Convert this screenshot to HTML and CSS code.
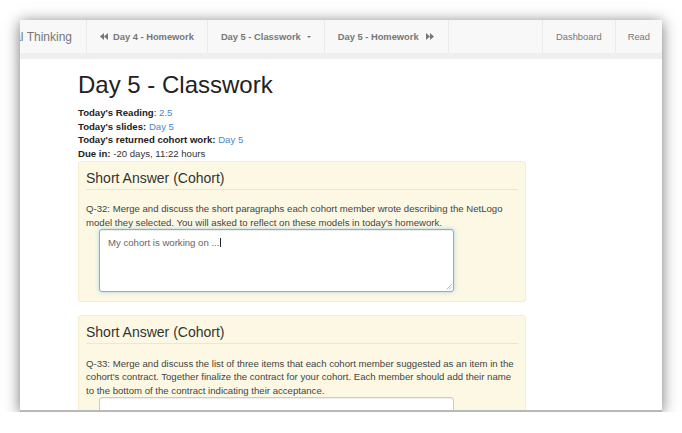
FILE: index.html
```html
<!DOCTYPE html>
<html>
<head>
<meta charset="utf-8">
<link rel="stylesheet" href="styles.css">
</head>
<body>
<div class="window">
  <nav class="navbar">
    <div class="brand"><span>Computational Thinking</span></div>
    <ul class="nav nav-left">
      <li class="item bold"><svg class="icon" width="8" height="7" viewBox="0 0 8 7"><polygon points="0,3.5 4,0 4,7" fill="#777"/><polygon points="4,3.5 8,0 8,7" fill="#777"/></svg>Day 4 - Homework</li>
      <li class="item bold">Day 5 - Classwork<span class="caret"></span></li>
      <li class="item bold last">Day 5 - Homework<svg class="icon icon-r" width="8" height="7" viewBox="0 0 8 7"><polygon points="0,0 4,3.5 0,7" fill="#777"/><polygon points="4,0 8,3.5 4,7" fill="#777"/></svg></li>
    </ul>
    <ul class="nav nav-right">
      <li class="item">Dashboard</li>
      <li class="item read">Read</li>
    </ul>
  </nav>
  <div class="strip"></div>
  <main class="content">
    <h1>Day 5 - Classwork</h1>
    <div class="info">
      <div><b>Today's Reading</b>: <a>2.5</a></div>
      <div><b>Today's slides:</b> <a>Day 5</a></div>
      <div><b>Today's returned cohort work:</b> <a>Day 5</a></div>
      <div><b>Due in:</b> -20 days, 11:22 hours</div>
    </div>
    <section class="panel">
      <h3 class="panel-title">Short Answer (Cohort)</h3>
      <p class="question">Q-32: Merge and discuss the short paragraphs each cohort member wrote describing the NetLogo model they selected. You will asked to reflect on these models in today's homework.</p>
      <div class="textarea focus"><span class="ph">My cohort is working on ...</span><span class="cursor"></span>
        <svg class="grip" width="6" height="6" viewBox="0 0 6 6"><line x1="5.5" y1="0.5" x2="0.5" y2="5.5" stroke="#aaa" stroke-width="0.8"/><line x1="5.5" y1="3" x2="3" y2="5.5" stroke="#aaa" stroke-width="0.8"/></svg>
      </div>
    </section>
    <section class="panel">
      <h3 class="panel-title">Short Answer (Cohort)</h3>
      <p class="question">Q-33: Merge and discuss the list of three items that each cohort member suggested as an item in the cohort's contract. Together finalize the contract for your cohort. Each member should add their name to the bottom of the contract indicating their acceptance.</p>
      <div class="textarea"></div>
    </section>
  </main>
</div>
</body>
</html>
```
FILE: styles.css
```css
html, body {
  margin: 0;
  padding: 0;
  background: #fff;
}
body {
  padding: 20px 20px 0 20px;
  font-family: "Liberation Sans", Arial, sans-serif;
  color: #333;
}
.window {
  width: 642px;
  height: 390px;
  overflow: hidden;
  background: #fff;
  border-bottom: 2px solid #b8b8b8;
  box-shadow: 0 2px 14px rgba(0, 0, 0, 0.55);
}
.navbar {
  display: flex;
  height: 33px;
  background: #f8f8f8;
  font-size: 9.33px;
  color: #777;
}
.brand {
  width: 66px;
  flex: none;
  box-sizing: border-box;
  padding-right: 14px;
  display: flex;
  justify-content: flex-end;
  align-items: center;
  overflow: hidden;
  white-space: nowrap;
  font-size: 12px;
  color: #777;
}
.nav {
  display: flex;
  margin: 0;
  padding: 0;
  list-style: none;
}
.nav-right {
  margin-left: auto;
}
.item {
  display: flex;
  align-items: center;
  padding: 0 13px;
  border-left: 1px solid #ebebeb;
  white-space: nowrap;
}
.item.last {
  border-right: 1px solid #ebebeb;
  padding-right: 14px;
}
.item.read {
  padding: 0 12px;
}
.bold {
  font-weight: bold;
}
.icon {
  margin-right: 5px;
}
.icon-r {
  margin: 0 0 0 7px;
}
.caret {
  display: inline-block;
  width: 0;
  height: 0;
  margin-left: 6px;
  border-left: 2.5px solid transparent;
  border-right: 2.5px solid transparent;
  border-top: 2.5px solid #777;
}
.strip {
  height: 6px;
  background: #efefef;
}
.content {
  padding-left: 58px;
}
h1 {
  margin: 13px 0 8px;
  font-size: 24px;
  line-height: 26px;
  font-weight: normal;
  color: #222;
}
.info {
  font-size: 9.6px;
  line-height: 13.67px;
  color: #333;
}
.info b {
  color: #222;
}
a {
  color: #4a87c9;
}
.panel {
  width: 448px;
  box-sizing: border-box;
  background: #fcf8e3;
  border: 1px solid #f8ecce;
  border-radius: 3px;
  padding: 9px 7px 9px;
  margin-bottom: 13px;
}
.panel-title {
  margin: 0;
  font-size: 14px;
  line-height: 15.4px;
  font-weight: normal;
  color: #333;
  padding-bottom: 2.5px;
  border-bottom: 1px solid #ebe7d8;
}
.question {
  margin: 12.5px 0 0;
  font-size: 9.6px;
  line-height: 13.6px;
  color: #444;
}
.textarea {
  position: relative;
  margin-left: 13px;
  width: 355px;
  height: 63px;
  box-sizing: border-box;
  background: #fff;
  border: 1px solid #ccc;
  border-radius: 3px;
  padding: 6px 8px;
  font-size: 9.6px;
  line-height: 13.33px;
  box-shadow: inset 0 1px 1px rgba(0, 0, 0, 0.075);
}
.textarea.focus {
  border-color: #74b4e8;
  box-shadow: inset 0 1px 1px rgba(0, 0, 0, 0.075), 0 0 4px rgba(102, 175, 233, 0.5);
}
.ph {
  color: #666;
}
.cursor {
  display: inline-block;
  width: 1px;
  height: 9px;
  background: #222;
  vertical-align: -1px;
  margin-left: 1px;
}
.grip {
  position: absolute;
  right: 1px;
  bottom: 1px;
}
```
